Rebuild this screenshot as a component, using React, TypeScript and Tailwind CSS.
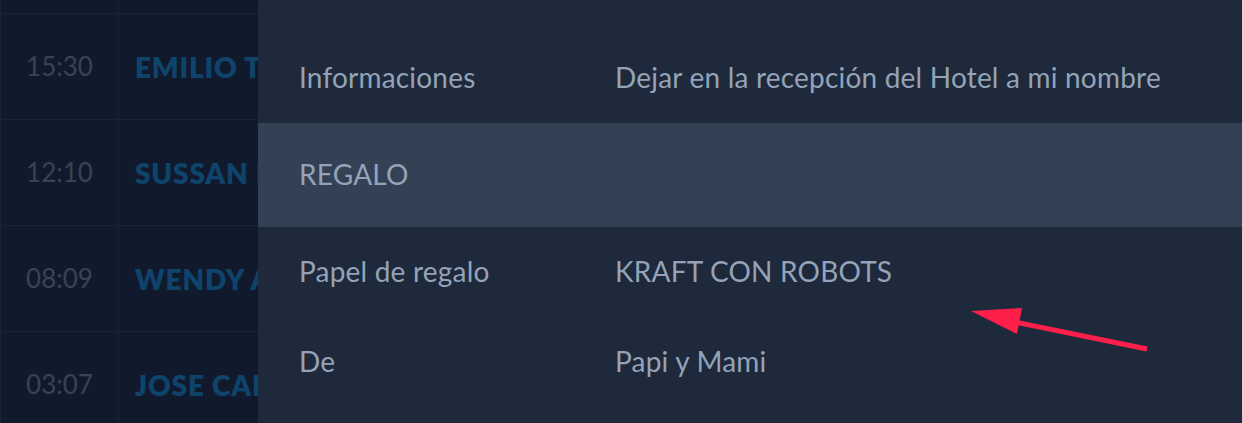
import React from "react";

const bookings = [
  { time: "18:45", name: "MARIA LOPEZ" },
  { time: "15:30", name: "EMILIO TORRES" },
  { time: "12:10", name: "SUSSAN MILLER" },
  { time: "08:09", name: "WENDY ALVAREZ" },
  { time: "03:07", name: "JOSE CARLOS" },
];

const details = [
  { label: "Papel de regalo", value: "KRAFT CON ROBOTS" },
  { label: "De", value: "Papi y Mami" },
];

function DetailRow({ label, value }: { label: string; value: string }) {
  return (
    <div className="flex h-[90px] items-center pb-[3px] pl-[41px]">
      <div className="w-[316px] shrink-0">{label}</div>
      <div>{value}</div>
    </div>
  );
}

export default function App() {
  return (
    <div
      className="relative flex h-[423px] w-[1242px] overflow-hidden bg-[#111a2c]"
      style={{ fontFamily: "Lato, 'Noto Sans', sans-serif" }}
    >
      {/* table dimmed behind the drawer */}
      <div className="w-[258px] shrink-0 overflow-hidden">
        <div className="-mt-[92px] flex flex-col border-l border-[#172338]">
          {bookings.map((b) => (
            <div key={b.time} className="flex h-[106px] border-b border-[#172338]">
              <div className="flex w-[118px] shrink-0 items-center justify-center border-r border-[#172338] text-[26px] text-[#384355]">
                {b.time}
              </div>
              <div className="flex items-center whitespace-nowrap pl-[16px] text-[28px] font-extrabold tracking-[0.8px] text-[#0e446c]">
                {b.name}
              </div>
            </div>
          ))}
        </div>
      </div>

      {/* drawer */}
      <div className="flex flex-1 flex-col bg-[#1e293b] text-[28px] tracking-[0.2px] text-[#94a3b8]">
        <div className="h-[33px]" />
        <DetailRow label="Informaciones" value="Dejar en la recepción del Hotel a mi nombre" />
        <div className="flex h-[104px] items-center pb-[3px] bg-[#334155] pl-[41px]">REGALO</div>
        {details.map((d) => (
          <DetailRow key={d.label} label={d.label} value={d.value} />
        ))}
      </div>

      {/* annotation arrow */}
      <svg
        className="pointer-events-none absolute left-0 top-0"
        width="1242"
        height="423"
        viewBox="0 0 1242 423"
      >
        <line x1="1147" y1="349" x2="1010" y2="321" stroke="#ff1f4b" strokeWidth="5" />
        <polygon points="971,311 1022,308 1017,334" fill="#ff1f4b" />
      </svg>
    </div>
  );
}
